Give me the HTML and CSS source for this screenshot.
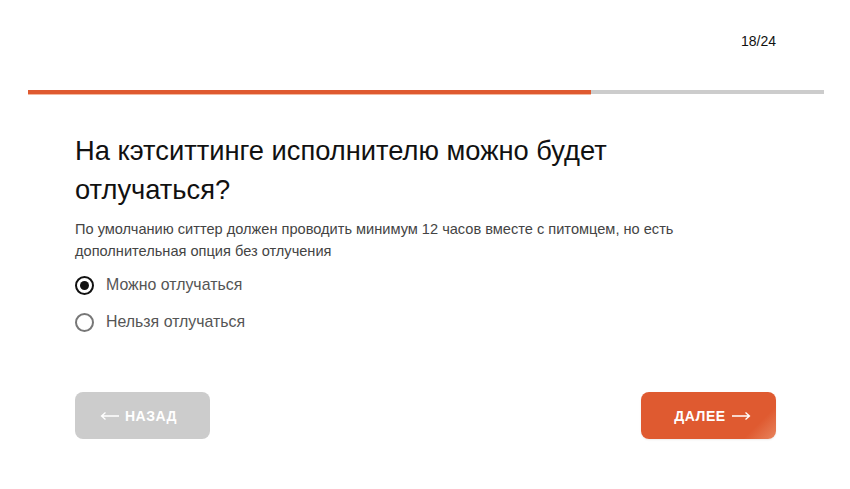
FILE: index.html
```
<!DOCTYPE html>
<html lang="ru">
<head>
<meta charset="utf-8">
<title>Вопрос 18/24</title>
<link rel="stylesheet" href="styles.css">
</head>
<body>
<div class="page">
  <div class="counter">18/24</div>
  <div class="progress"><div class="progress-fill"></div></div>
  <main class="content">
    <h1 class="title">На кэтситтинге исполнителю можно будет отлучаться?</h1>
    <p class="hint">По умолчанию ситтер должен проводить минимум 12 часов вместе с питомцем, но есть дополнительная опция без отлучения</p>
    <div class="options">
      <label class="option"><span class="radio checked"></span><span class="option-text">Можно отлучаться</span></label>
      <label class="option"><span class="radio"></span><span class="option-text">Нельзя отлучаться</span></label>
    </div>
    <div class="actions">
      <button class="btn btn-back"><svg class="arrow" width="20" height="10" viewBox="0 0 20 10"><path d="M19 5H1.5M5.5 1.5L1.5 5l4 3.5" fill="none" stroke="currentColor" stroke-width="1.3"/></svg>НАЗАД</button>
      <button class="btn btn-next">ДАЛЕЕ<svg class="arrow" width="20" height="10" viewBox="0 0 20 10"><path d="M1 5h17.5M14.5 1.5L18.5 5l-4 3.5" fill="none" stroke="currentColor" stroke-width="1.3"/></svg></button>
    </div>
  </main>
</div>
</body>
</html>
```
FILE: styles.css
```
* { box-sizing: border-box; }
html, body { margin: 0; padding: 0; background: #fff; }
body { font-family: "Liberation Sans", Arial, sans-serif; color: #111; }
.page { width: 850px; height: 489px; }
.counter {
  padding: 33px 74px 0 0;
  text-align: right;
  font-size: 14px;
  line-height: 16px;
  color: #111;
}
.progress {
  margin: 41px 26px 0 28px;
  height: 4px;
  background: #cccccc;
}
.progress-fill {
  width: 563px;
  height: 4px;
  background: #df5a30;
  box-shadow: 0 1px 0 #f3b89f;
}
.content { padding: 0 74px 0 75px; }
.title {
  margin: 37px 0 0;
  font-size: 27.3px;
  line-height: 39px;
  font-weight: 400;
  color: #111;
  width: 600px;
}
.hint {
  margin: 9px 0 0;
  font-size: 14.6px;
  line-height: 22px;
  color: #444;
  width: 640px;
}
.options { margin-top: 11px; display: flex; flex-direction: column; gap: 13px; }
.option { display: flex; align-items: center; gap: 12px; height: 24px; }
.radio {
  width: 19px; height: 19px;
  border: 2px solid #777;
  border-radius: 50%;
  display: flex; align-items: center; justify-content: center;
  flex: none;
}
.radio.checked { border-color: #111; }
.radio.checked::after {
  content: "";
  width: 9px; height: 9px;
  border-radius: 50%;
  background: #111;
}
.option-text { font-size: 15.9px; color: #555; }
.actions {
  margin-top: 58px;
  display: flex;
  justify-content: space-between;
}
.btn {
  width: 135px;
  height: 47px;
  border: 0;
  border-radius: 8px;
  font-family: "Liberation Sans", Arial, sans-serif;
  font-weight: 700;
  font-size: 14px;
  letter-spacing: 0.5px;
  color: #fff;
  display: flex;
  align-items: center;
  justify-content: center;
  gap: 5px;
  padding: 0;
}
.btn-back { background: #cccccc; padding-right: 8px; }
.btn-next {
  background: linear-gradient(135deg, #df5a30 0%, #df5a30 82%, #e8845e 100%);
  box-shadow: 0 1px 2px rgba(0,0,0,0.08);
  padding-left: 8px;
}
.arrow { display: block; }
```
